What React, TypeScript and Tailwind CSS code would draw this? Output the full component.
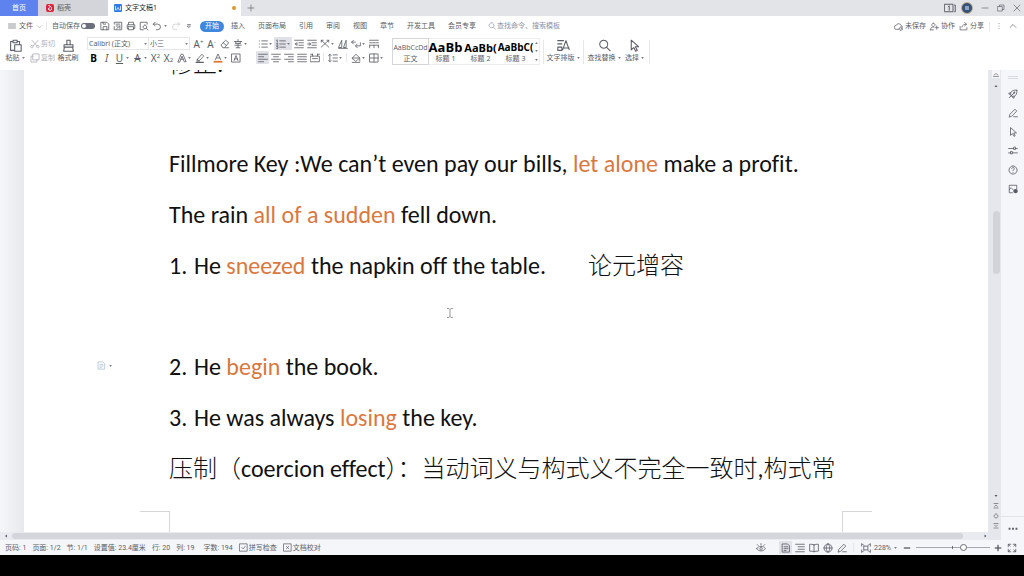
import type { ReactNode } from "react";
import clsx from "clsx";

const Icon = ({ d, fill, className }: { d: string; fill?: string; className?: string }) => (
  <svg
    viewBox="0 0 16 16"
    className={clsx("shrink-0", className ?? "size-[10px]")}
    fill="none"
    stroke="currentColor"
    strokeWidth="1.3"
    strokeLinecap="round"
    strokeLinejoin="round"
    aria-hidden="true"
  >
    <path d={d} />
    {fill && <path d={fill} fill="currentColor" stroke="none" />}
  </svg>
);

const Caret = () => (
  <svg viewBox="0 0 4 3" className="h-[2px] w-[3px] shrink-0 text-[#777a82]" aria-hidden="true">
    <path d="M0 0h4L2 3z" fill="currentColor" />
  </svg>
);

const Divider = ({ className }: { className?: string }) => (
  <div className={clsx("w-px shrink-0 bg-[#e6e7eb]", className ?? "h-3")} />
);

const icons = {
  save: "M2 2h9l3 3v9H2zM5 14V9h6v5M5 2v3h4",
  export: "M2 5V2h12v12H2V9M5 5h6M5 8h3M6 12l5-4M11 8v4",
  print: "M4 6V2h8v4M4 12H2V6h12v6h-2M4 9h8v5H4z",
  preview: "M13 5V2H2v12h5M9.500 6.500a3 3 0 1 0 .1 0M12 12l2.500 2.500",
  undo: "M5 2L2 5l3 3M2 5h7a4.500 4.500 0 0 1 0 9H7",
  redo: "M11 2l3 3-3 3M14 5H7a4.500 4.500 0 0 0 0 9h2",
  menu: "M1 4h14M1 8h14M1 12h14",
  down: "M3 6l5 5 5-5",
  up: "M2 11l6-6 6 6",
  paste: "M5 3H2v11h4M10 3h3v3M5 1.500h5v3H5zM7 7h8v8H7z",
  cut: "M3 2l8 9M13 2L5 11M5 12.500a2 2 0 1 1-.1-1M14.500 12.500a2 2 0 1 1-.1-1",
  copy: "M5 1.500h9.500V11H5zM5 5H1.500v9.500H11V11",
  brush: "M6 7V1.500h4V7M2.500 7h11v3h-11zM3 10l-1 5h12l-1-5",
  eraser: "M2 9l7-7 5 4-7 8H5zM5 6l5 4M8 14h6",
  pinyin: "M2 4h12M8 1v3M4 7h8M3 10h10M8 7v7M5 14h6M4 4l1 3M12 4l-1 3",
  bullets: "M6 3h9M6 8h9M6 13h9M2 3h.2M2 8h.2M2 13h.2",
  numbers: "M6 3h9M6 8h9M6 13h9M1 2l1-.5V5M1 7h2L1 10h2M1 12h2v3H1",
  outdent: "M1 2h14M8 6h7M8 10h7M1 14h14M5 5.500L2 8l3 2.500M2 8h4",
  indent: "M1 2h14M8 6h7M8 10h7M1 14h14M3 5.500L6 8l-3 2.500M1 8h5",
  scale: "M2 2l12 11M14 2L2 13M5 2H2v3M11 2h3v3",
  sort: "M1 13L6 2v11zM9 13L13 2v11zM1 15h14",
  wrap: "M4 2L1 5l3 3M1 5h6M15 6v5H8M10 8l-3 3 3 3",
  tabs: "M1 2h14M1 6h4M6.500 6h3M11 6h4M1 10v4M8 10v4M15 10v4M1 10h14",
  left: "M1 2h14M1 6h8M1 10h14M1 14h8",
  center: "M1 2h14M4 6h8M1 10h14M4 14h8",
  right: "M1 2h14M7 6h8M1 10h14M7 14h8",
  justify: "M1 2h14M1 6h14M1 10h14M1 14h14",
  spread: "M1 5h14v9H1zM4 2v3M12 2v3M4 9h8M1 2h3M12 2h3",
  spacing: "M3 2v12M1 4l2-2 2 2M1 12l2 2 2-2M8 3h7M8 8h7M8 13h7",
  bucket: "M2 8l6-6 6 6-6 5zM2 8h12M14 10v3M2 15h12",
  borders: "M1.500 1.500h13v13h-13zM8 1.500v13M1.500 8h13",
  marker: "M4 10l7-8 3 3-7 7zM4 10l-1 3h4",
  typeset: "M1 2h7M1 6h5M1 10h5v4H1zM9 11h6M7 13L11 2l4 11",
  search: "M7 1.500a5 5 0 1 0 .1 0M11 10.500l4 4",
  pointer: "M4 1.500v12l3-3 2.500 4.500 2-1-2.500-4.500h4z",
  cloud: "M8 13H4a3.500 3.500 0 0 1 0-7 4.500 4.500 0 0 1 8.500 0A3 3 0 0 1 15 9M12 9a3 3 0 1 0 .1 0M11 12l1 1 2-2",
  coop: "M6 2a3 3 0 1 0 .1 0M1 14c0-4 2-5 5-5M6 14H1M12 7v6M9 10h6",
  share: "M2 8v6h12v-4M5 9c1-4 4-5 8-5M10 1l3.500 3L10 7",
  rocket: "M14 2C9 1 5 3 3 8l5 5c5-2 7-6 6-11zM4 6L1 7l3 3M10 12l-1 3-3-3M2 14l4-4M6 8l2 2M10 5a1 1 0 1 0 .1 0M5 11l6-6",
  pen: "M2 14l1-4 8-8 3 3-8 8zM9 14h6",
  sliders: "M1 4h8M12 4h3M9 2.500v3h3v-3zM1 11h3M7 11h8M4 9.500v3h3v-3z",
  help: "M8 1.500a6.500 6.500 0 1 0 .1 0M6 6c0-3 4-3 4 0 0 1.500-2 1.500-2 3M8 11.500v.2",
  image: "M7 14H2V2h12v6M2 9l3-3 3 3",
  eye: "M1 9c3-5 11-5 14 0-3 5-11 5-14 0zM8 7a2 2 0 1 0 .1 0M8 3V1M3.500 4L2 2.500M12.500 4L14 2.500",
  page: "M2.500 1.500h8l3 3v10h-11zM5 6h6M5 9h6M5 12h3",
  outline: "M1 2h14M5 6h10M5 10h10M1 14h14",
  book: "M8 3v11M8 3C6 2 4 2 1 2v11c3 0 5 0 7 1 2-1 4-1 7-1V2c-3 0-5 0-7 1z",
  globe: "M8 1.500a6.500 6.500 0 1 0 .1 0M1.500 8h13M8 1.500c-4 3-4 10 0 13M8 1.500c4 3 4 10 0 13",
  fit: "M1 5V1l4 3M15 5V1l-4 3M15 11v4l-4-3M1 11v4l4-3M5 5h6v6H5z",
  full: "M2 6V2h4M10 2h4v4M14 10v4h-4M6 14H2v-4M2 2l3 3M14 2l-3 3M14 14l-3-3M2 14l3-3",
  check: "M1.500 1.500h13v13h-13zM5 8l2.500 2.500L11 6",
  cross: "M1.500 1.500h13v13h-13zM6 6l4 4M10 6l-4 4",
};

const Tool = ({
  label,
  caret,
  active,
  children,
}: {
  label: string;
  caret?: boolean;
  active?: boolean;
  children: ReactNode;
}) => (
  <button
    aria-label={label}
    className={clsx(
      "flex h-[13px] shrink-0 items-center whitespace-nowrap",
      caret ? "w-[18px]" : "w-[13px]",
      active && "rounded-[1px] bg-[#e1e2e8]"
    )}
  >
    <span className="flex w-[13px] shrink-0 justify-center">{children}</span>
    {caret && <Caret />}
  </button>
);

const TitleBar = () => (
  <header className="flex h-4 shrink-0 items-stretch bg-[#e2e4e8]">
    <button className="w-[38px] bg-[#5f83ee] text-white">首页</button>
    <button className="flex w-[70px] items-center gap-[3px] bg-[#d3d5da] pl-2">
      <svg viewBox="0 0 16 16" className="size-2" aria-hidden="true">
        <rect width="16" height="16" rx="4" fill="#d9243c" />
        <path d="M5 3c4 1 6 3 6 6a3 3 0 0 1-6 1c0-3 2-3 3-2" fill="none" stroke="#fff" strokeWidth="2" />
      </svg>
      稻壳
    </button>
    <button className="flex w-[133px] items-center gap-[3px] bg-white pr-[5px] pl-[6px] text-[#26282e]">
      <svg viewBox="0 0 16 16" className="size-2" aria-hidden="true">
        <rect width="16" height="16" rx="2" fill="#2f7de8" />
        <path d="M3 4v8h2l3-5 3 5h2V4" fill="none" stroke="#fff" strokeWidth="1.500" />
      </svg>
      文字文稿1
      <span className="ml-auto size-1 rounded-full bg-[#d8982c]" />
    </button>
    <button aria-label="新建" className="flex w-5 items-center justify-center">
      <Icon d="M8 2v12M2 8h12" className="size-2" />
    </button>
    <div className="ml-auto flex items-center pr-[3px]">
      <button aria-label="窗口" className="mr-[5px]">
        <Icon d="M1 3h11v10H1zM6 6l1-1v6M14 4h1v9h-1" className="size-3" />
      </button>
      <span className="mr-2 flex size-3 items-center justify-center rounded-full border border-[#c6b48a] bg-[#35507c]">
        <span className="size-1 bg-[#8da3c0]" />
      </span>
      <button aria-label="最小化" className="mr-2"><Icon d="M2 8h12" className="size-2" /></button>
      <button aria-label="还原" className="mr-2"><Icon d="M1.500 5h9v9h-9zM5 5V2h9v9h-3" className="size-2" /></button>
      <button aria-label="关闭"><Icon d="M2 2l12 12M14 2L2 14" className="size-2" /></button>
    </div>
  </header>
);

const tabs = ["插入", "页面布局", "引用", "审阅", "视图", "章节", "开发工具", "会员专享"];

const MenuBar = () => (
  <nav className="flex h-[21px] shrink-0 items-center pb-px whitespace-nowrap">
    <button className="flex items-center gap-[3px] pl-[8px]">
      <Icon d={icons.menu} className="size-2" />
      文件
      <Icon d={icons.down} className="size-[7px] text-[#9a9da5]" />
    </button>
    <Divider className="mr-[5px] ml-[3px] h-2" />
    <label className="flex items-center gap-px">
      自动保存
      <input
        type="checkbox"
        className="h-[6px] w-[14px] appearance-none rounded-full bg-[#6c6f7c] before:block before:size-1 before:translate-x-px before:translate-y-px before:rounded-full before:bg-white"
      />
    </label>
    <div className="ml-[5px] flex items-center gap-[3px]">
      <button aria-label="保存"><Icon d={icons.save} /></button>
      <button aria-label="输出"><Icon d={icons.export} /></button>
      <button aria-label="打印"><Icon d={icons.print} /></button>
      <button aria-label="预览"><Icon d={icons.preview} /></button>
      <button aria-label="撤销" className="flex items-center gap-[2px]"><Icon d={icons.undo} /><Caret /></button>
      <button aria-label="恢复" className="ml-px text-[#c9cbd1]"><Icon d={icons.redo} /></button>
      <button aria-label="更多" className="ml-px"><Icon d="M5 5h6M5 8h6l-3 3z" className="size-2" /></button>
    </div>
    <button className="ml-[7px] h-[11px] w-6 rounded-full bg-[#3f87dd] text-white">开始</button>
    <div className="ml-[7px] flex gap-[13px]">
      {tabs.map((tab) => (
        <button key={tab}>{tab}</button>
      ))}
    </div>
    <label className="ml-3 flex items-center gap-px text-[#8d91a6]">
      <Icon d={icons.search} className="size-2" />
      <input
        aria-label="搜索"
        placeholder="查找命令、搜索模板"
        className="w-[70px] bg-transparent outline-none placeholder:text-[#8d91a6]"
      />
    </label>
    <div className="ml-auto flex items-center pr-[7px]">
      <button className="mr-1 flex items-center gap-[2px]"><Icon d={icons.cloud} className="size-[9px]" />未保存</button>
      <button className="mr-1 flex items-center gap-[2px]"><Icon d={icons.coop} className="size-[9px]" />协作</button>
      <button className="flex items-center gap-[2px]"><Icon d={icons.share} className="size-[9px]" />分享</button>
      <Divider className="mx-[5px] h-[9px]" />
      <button aria-label="选项" className="mr-[6px]"><Icon d="M8 3v.2M8 8v.2M8 13v.2" className="size-2" /></button>
      <button aria-label="收起"><Icon d={icons.up} className="size-2" /></button>
    </div>
  </nav>
);

const styles = [
  { name: "正文", sample: "AaBbCcDd", look: "text-[7px]", active: true },
  { name: "标题 1", sample: "AaBb", look: "text-[13px] font-bold text-black" },
  { name: "标题 2", sample: "AaBb(", look: "text-[11px] font-bold text-black" },
  { name: "标题 3", sample: "AaBbC(", look: "text-[10px] font-bold text-black" },
];

const Letter = ({ children, className }: { children: ReactNode; className?: string }) => (
  <span className={clsx("flex h-[10px] text-[10px] leading-[10px]", className)}>{children}</span>
);

const Small = ({ children, low }: { children: ReactNode; low?: boolean }) => (
  <span className={clsx("text-[6px] leading-[6px]", low && "self-end")}>{children}</span>
);

const Ribbon = () => (
  <div className="flex h-[33px] shrink-0 items-start whitespace-nowrap">
    <button className="flex w-[30px] flex-col items-center pt-[2px]">
      <Icon d={icons.paste} className="size-[13px]" />
      <span className="flex items-center gap-[2px] leading-[12px]">粘贴<Caret /></span>
    </button>
    <div className="flex w-[27px] flex-col text-[#b0b2b8]">
      <button className="flex h-[14px] items-center gap-px"><Icon d={icons.cut} />剪切</button>
      <button className="flex h-[14px] items-center gap-px"><Icon d={icons.copy} />复制</button>
    </div>
    <button className="flex w-[22px] flex-col items-center pt-[2px]">
      <Icon d={icons.brush} className="size-[13px]" />
      <span className="leading-[12px]">格式刷</span>
    </button>
    <div className="ml-2 flex w-[164px] flex-col gap-px">
      <div className="flex">
        <div className="flex h-[13px] items-center border border-[#e6e7eb] pr-px pl-px">
          <select aria-label="字体" className="w-[55px] appearance-none outline-none">
            <option>Calibri (正文)</option>
          </select>
          <Caret />
        </div>
        <div className="mr-[2px] flex h-[13px] items-center border border-l-0 border-[#e6e7eb] pr-px pl-px">
          <select aria-label="字号" className="w-[35px] appearance-none outline-none">
            <option>小三</option>
          </select>
          <Caret />
        </div>
        <Tool label="增大字号"><Letter>A<Small>+</Small></Letter></Tool>
        <Tool label="减小字号"><Letter>A<Small>-</Small></Letter></Tool>
        <Tool label="清除格式"><Icon d={icons.eraser} /></Tool>
        <Tool label="拼音指南" caret><Icon d={icons.pinyin} /></Tool>
      </div>
      <div className="flex">
        <Tool label="加粗"><Letter className="font-bold text-black">B</Letter></Tool>
        <Tool label="倾斜"><Letter className="italic">I</Letter></Tool>
        <Tool label="下划线" caret><Letter className="underline">U</Letter></Tool>
        <Tool label="删除线" caret><Letter className="line-through">A</Letter></Tool>
        <Tool label="上标"><Letter>X<Small>2</Small></Letter></Tool>
        <Tool label="下标"><Letter>X<Small low>2</Small></Letter></Tool>
        <Tool label="文字效果" caret><Icon d="M1.500 14L6.500 2h3l5 12h-3L8 5l-3.500 9zM6 10h4" /></Tool>
        <Tool label="突出显示" caret>
          <Icon d={icons.marker} fill="M1 14h13v2H1z" />
        </Tool>
        <Tool label="字体颜色" caret>
          <svg viewBox="0 0 16 16" className="size-[10px]" fill="none" stroke="currentColor" strokeWidth="1.300" aria-hidden="true">
            <path d="M3.500 11L8 1.500 12.500 11M5 8h6" />
            <path d="M1 14h14" stroke="#e07a35" strokeWidth="3" />
          </svg>
        </Tool>
        <Tool label="字符底纹"><Icon d="M1.500 1.500h13v13h-13zM5 12l3-8 3 8M6 9.500h4" /></Tool>
      </div>
    </div>
    <div className="ml-[5px] flex w-[131px] flex-col gap-px">
      <div className="flex">
        <Tool label="项目符号" caret><Icon d={icons.bullets} /></Tool>
        <Tool label="编号" caret active><Icon d={icons.numbers} /></Tool>
        <Tool label="减少缩进"><Icon d={icons.outdent} /></Tool>
        <Tool label="增加缩进"><Icon d={icons.indent} /></Tool>
        <Tool label="中文版式" caret><Icon d={icons.scale} /></Tool>
        <Tool label="排序"><Icon d={icons.sort} /></Tool>
        <Tool label="换行" caret><Icon d={icons.wrap} /></Tool>
        <Tool label="制表位"><Icon d={icons.tabs} /></Tool>
      </div>
      <div className="flex items-center">
        <Tool label="左对齐" active><Icon d={icons.left} /></Tool>
        <Tool label="居中"><Icon d={icons.center} /></Tool>
        <Tool label="右对齐"><Icon d={icons.right} /></Tool>
        <Tool label="两端对齐"><Icon d={icons.justify} /></Tool>
        <Tool label="分散对齐"><Icon d={icons.spread} /></Tool>
        <Divider className="mx-[2px] h-[9px]" />
        <Tool label="行距" caret><Icon d={icons.spacing} /></Tool>
        <Divider className="mx-[2px] h-[9px]" />
        <Tool label="底纹" caret><Icon d={icons.bucket} /></Tool>
        <Tool label="边框" caret><Icon d={icons.borders} /></Tool>
      </div>
    </div>
    <div className="mt-px ml-[5px] flex h-[27px] border border-[#eceded]">
      {styles.map((style) => (
        <button
          key={style.name}
          className={clsx(
            "flex w-[35px] flex-col items-center overflow-hidden",
            style.active && "outline outline-[#d3d5da]"
          )}
        >
          <span className={clsx("h-[15px] font-['Open_Sans'] leading-[17px]", style.look)}>{style.sample}</span>
          <span className="leading-[10px]">{style.name}</span>
        </button>
      ))}
      <div className="flex w-[6px] flex-col items-center justify-around">
        <button aria-label="上一行" className="rotate-180"><Caret /></button>
        <button aria-label="下一行"><Caret /></button>
        <button aria-label="更多样式"><Caret /></button>
      </div>
    </div>
    <Divider className="mt-[3px] ml-[3px] h-6" />
    <button className="flex w-[38px] flex-col items-center pt-[2px]">
      <Icon d={icons.typeset} className="size-[13px]" />
      <span className="flex items-center gap-[2px] leading-[12px]">文字排版<Caret /></span>
    </button>
    <Divider className="mt-[3px] ml-px h-6" />
    <button className="ml-[2px] flex w-[36px] flex-col items-center pt-[2px]">
      <Icon d={icons.search} className="size-[13px]" />
      <span className="flex items-center gap-[2px] leading-[12px]">查找替换<Caret /></span>
    </button>
    <button className="flex w-[25px] flex-col items-center pt-[2px]">
      <Icon d={icons.pointer} className="size-[13px]" />
      <span className="flex items-center gap-[2px] leading-[12px]">选择<Caret /></span>
    </button>
    <Divider className="mt-[3px] ml-[2px] h-6" />
  </div>
);

const Mark = ({ children }: { children: ReactNode }) => <span className="text-[#d9783f]">{children}</span>;

const Line = ({ number, children }: { number?: string; children: ReactNode }) => (
  <p className="flex h-[51px] items-center whitespace-pre">
    {number && <span className="w-[25px]">{number}</span>}
    <span>{children}</span>
  </p>
);

const Page = () => (
  <main className="relative flex-1 overflow-hidden bg-white pl-[145px] font-['Carlito','Lato','Noto_Sans_CJK_SC',sans-serif] text-[24px] leading-6 text-[#111] [font-variant-ligatures:none]">
    <div className="-mt-8">
      <Line><span className="font-light">修正:</span></Line>
      <div className="h-[49px]" />
      <Line>Fillmore Key :We can’t even pay our bills, <Mark>let alone</Mark> make a profit.</Line>
      <Line>The rain <Mark>all of a sudden</Mark> fell down.</Line>
      <Line number="1.">
        He <Mark>sneezed</Mark> the napkin off the table.<span className="ml-[42px] font-light">论元增容</span>
      </Line>
      <div className="h-[50px]" />
      <Line number="2.">He <Mark>begin</Mark> the book.</Line>
      <Line number="3.">He was always <Mark>losing</Mark> the key.</Line>
      <Line>
        <span className="font-light">压制（</span>coercion effect
        <span className="font-light">）：当动词义与构式义不完全一致时,构式常</span>
      </Line>
    </div>
    <div className="mt-[17px] -ml-[29px] flex gap-[672px]">
      <div className="h-6 w-[30px] shrink-0 border-t border-r border-[#d5d6d9]" />
      <div className="h-6 w-[30px] shrink-0 border-t border-l border-[#d5d6d9]" />
    </div>
    <svg viewBox="0 0 8 12" className="absolute top-[237px] left-[422px] h-3 w-2" fill="none" stroke="#999" aria-hidden="true">
      <path d="M1 1.500h2l1 1 1-1h2M4 2v8M1 10.500h2l1-1 1 1h2" />
    </svg>
    <button aria-label="段落布局" className="absolute top-[291px] left-[73px] flex items-center gap-[3px] text-[#a9bdd6]">
      <Icon d={icons.page} className="size-[9px]" />
      <Caret />
    </button>
  </main>
);

const panelTools = [
  { label: "推荐", d: icons.rocket },
  { label: "样式", d: icons.pen },
  { label: "选择", d: icons.pointer },
  { label: "设置", d: icons.sliders },
  { label: "帮助", d: icons.help },
];

const SidePanel = () => (
  <aside className="flex w-[23px] shrink-0 flex-col items-center bg-[#f5f6fa] pt-[6px]">
    <span className="h-[3px] w-[10px] border-y border-[#d8d9de]" />
    <div className="mt-[10px] flex flex-col items-center gap-[9px]">
      {panelTools.map((tool) => (
        <button key={tool.label} aria-label={tool.label}>
          <Icon d={tool.d} />
        </button>
      ))}
      <button aria-label="图片">
        <Icon d={icons.image} fill="M12 8a3.500 3.500 0 1 0 .1 0z" />
      </button>
    </div>
    <div className="mt-auto flex h-6 w-full items-center justify-center border-t border-[#e3e4e9]">
      <button aria-label="更多工具">
        <Icon d="" fill="M1 6h3v3H1zM6.500 6h3v3h-3zM12 6h3v3h-3z" />
      </button>
    </div>
  </aside>
);

const Scrollbar = () => (
  <div className="flex w-[13px] shrink-0 flex-col items-end bg-[#e6e7ec] pr-px">
    <Icon d="M4 10l4-3 4 3M3 13h10" className="size-2 bg-[#f7f7fa]" />
    <Icon d="" fill="M5 10l3-4 3 4z" className="mt-1 size-2" />
    <div className="mt-[121px] h-[63px] w-[7px] rounded-full bg-[#d2d3d9]" />
    <div className="mt-auto flex flex-col items-center gap-[2px] pb-[10px]">
      <Icon d="" fill="M5 6l3 4 3-4z" className="size-2" />
      <Icon d="M4 3h8M5 9l3-3 3 3M4 12h8" className="size-2" />
      <Icon d="M8 4a4 4 0 1 0 .1 0" className="size-2" />
      <Icon d="M4 3h8M5 6l3 3 3-3M4 12h8" className="size-2" />
    </div>
  </div>
);

const StatusBar = () => (
  <footer className="flex h-[15px] shrink-0 items-center bg-[#f5f6fa] pl-[5px] font-['Roboto','Noto_Sans_CJK_SC',sans-serif] whitespace-nowrap">
    <div className="flex items-center gap-[6px]">
      <span>页码: 1</span>
      <span>页面: 1/2</span>
      <span>节: 1/1</span>
      <span>设置值: 23.4厘米</span>
      <span>行: 20</span>
      <span>列: 19</span>
      <span className="ml-[3px]">字数: 194</span>
      <button className="flex items-center gap-px"><Icon d={icons.check} className="size-[9px]" />拼写检查</button>
      <button className="flex items-center gap-px"><Icon d={icons.cross} className="size-[9px]" />文档校对</button>
    </div>
    <div className="ml-auto flex items-center pr-[7px]">
      <button aria-label="护眼模式" className="mr-[13px]"><Icon d={icons.eye} /></button>
      <div className="flex items-center gap-px">
        <Tool label="页面视图" active><Icon d={icons.page} /></Tool>
        <Tool label="大纲"><Icon d={icons.outline} /></Tool>
        <Tool label="阅读版式"><Icon d={icons.book} /></Tool>
        <Tool label="Web版式"><Icon d={icons.globe} /></Tool>
        <Tool label="写作模式"><Icon d={icons.pen} /></Tool>
      </div>
      <Divider className="mr-[7px] ml-[5px] h-[9px]" />
      <button aria-label="适应页面"><Icon d={icons.fit} /></button>
      <button className="ml-[3px] flex items-center gap-[3px]">228%<Caret /></button>
      <button aria-label="缩小" className="ml-[6px]"><Icon d="M2 8h12" fill="M2 7h12v2H2z" className="size-2" /></button>
      <div className="relative ml-[5px] flex items-center">
        <input
          type="range"
          aria-label="显示比例"
          min={0}
          max={100}
          defaultValue={66}
          className="h-px w-[74px] appearance-none bg-[#a6a8af] [&::-webkit-slider-thumb]:size-[7px] [&::-webkit-slider-thumb]:appearance-none [&::-webkit-slider-thumb]:rounded-full [&::-webkit-slider-thumb]:border [&::-webkit-slider-thumb]:border-[#6a6d75] [&::-webkit-slider-thumb]:bg-white"
        />
        <span className="absolute left-[36px] h-[3px] w-px bg-[#6a6d75]" />
      </div>
      <button aria-label="放大" className="ml-1"><Icon d="M8 2v12M2 8h12" fill="M2 7h12v2H2zM7 2h2v12H7z" className="size-2" /></button>
      <button aria-label="全屏" className="ml-[5px]"><Icon d={icons.full} /></button>
    </div>
  </footer>
);

const App = () => (
  <div className="flex h-screen flex-col bg-white font-['Noto_Sans','Noto_Sans_CJK_SC',sans-serif] text-[7px] leading-[10px] text-[#5a5d65]">
    <TitleBar />
    <MenuBar />
    <Ribbon />
    <div className="flex min-h-0 flex-1">
      <div className="flex min-w-0 flex-1 flex-col">
        <div className="flex min-h-0 flex-1">
          <div className="w-6 shrink-0 bg-linear-to-r from-[#f5f6fa] to-[#e8e9ed]" />
          <Page />
        </div>
        <div className="flex h-2 shrink-0 items-center bg-[#eaebf0]">
          <Icon d="" fill="M10 5v6L6 8z" className="mx-[2px] size-2" />
          <div className="h-[6px] flex-1 rounded-full bg-[#d4d6db]" />
          <Icon d="" fill="M9 5v6l4-3z" className="ml-[17px] size-2" />
        </div>
      </div>
      <Scrollbar />
      <SidePanel />
    </div>
    <StatusBar />
    <div className="h-[21px] shrink-0 bg-black" />
  </div>
);

export default App;
